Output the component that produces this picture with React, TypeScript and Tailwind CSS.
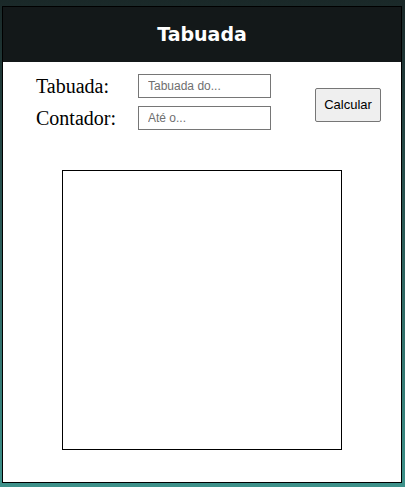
import React from "react";

export default function App() {
  return (
    <div className="w-[405px] h-[487px] overflow-hidden bg-[linear-gradient(to_bottom,#1a2828,#3d918a)] pt-[6px] pl-[2px]">
      <div className="w-[400px] border border-black bg-white flex flex-col">
        <div className="h-[55px] bg-[#131819] flex items-center justify-center">
          <h1 className="text-white font-bold text-[19px] font-['DejaVu_Sans',sans-serif]">Tabuada</h1>
        </div>
        <div className="flex items-center mt-[12px] pl-[33px]">
          <div className="grid grid-cols-[102px_133px] gap-y-[8px] items-center">
            <label className="font-['Liberation_Serif',serif] text-[20px] leading-none text-black">Tabuada:</label>
            <input
              placeholder="Tabuada do..."
              className="h-[24px] w-[133px] border border-[#767676] px-[9px] text-[12px] font-['Liberation_Sans',sans-serif] placeholder:text-[#6f6f6f] outline-none"
            />
            <label className="font-['Liberation_Serif',serif] text-[20px] leading-none text-black">Contador:</label>
            <input
              placeholder="Até o..."
              className="h-[24px] w-[133px] border border-[#767676] px-[9px] text-[12px] font-['Liberation_Sans',sans-serif] placeholder:text-[#6f6f6f] outline-none"
            />
          </div>
          <button className="ml-[44px] mt-[6px] w-[66px] h-[34px] bg-[#efefef] border border-[#767676] rounded-[2px] text-[13px] font-['Liberation_Sans',sans-serif] text-black">
            Calcular
          </button>
        </div>
        <div className="mt-[40px] mb-[32px] mx-auto w-[280px] h-[280px] border border-black" />
      </div>
    </div>
  );
}
